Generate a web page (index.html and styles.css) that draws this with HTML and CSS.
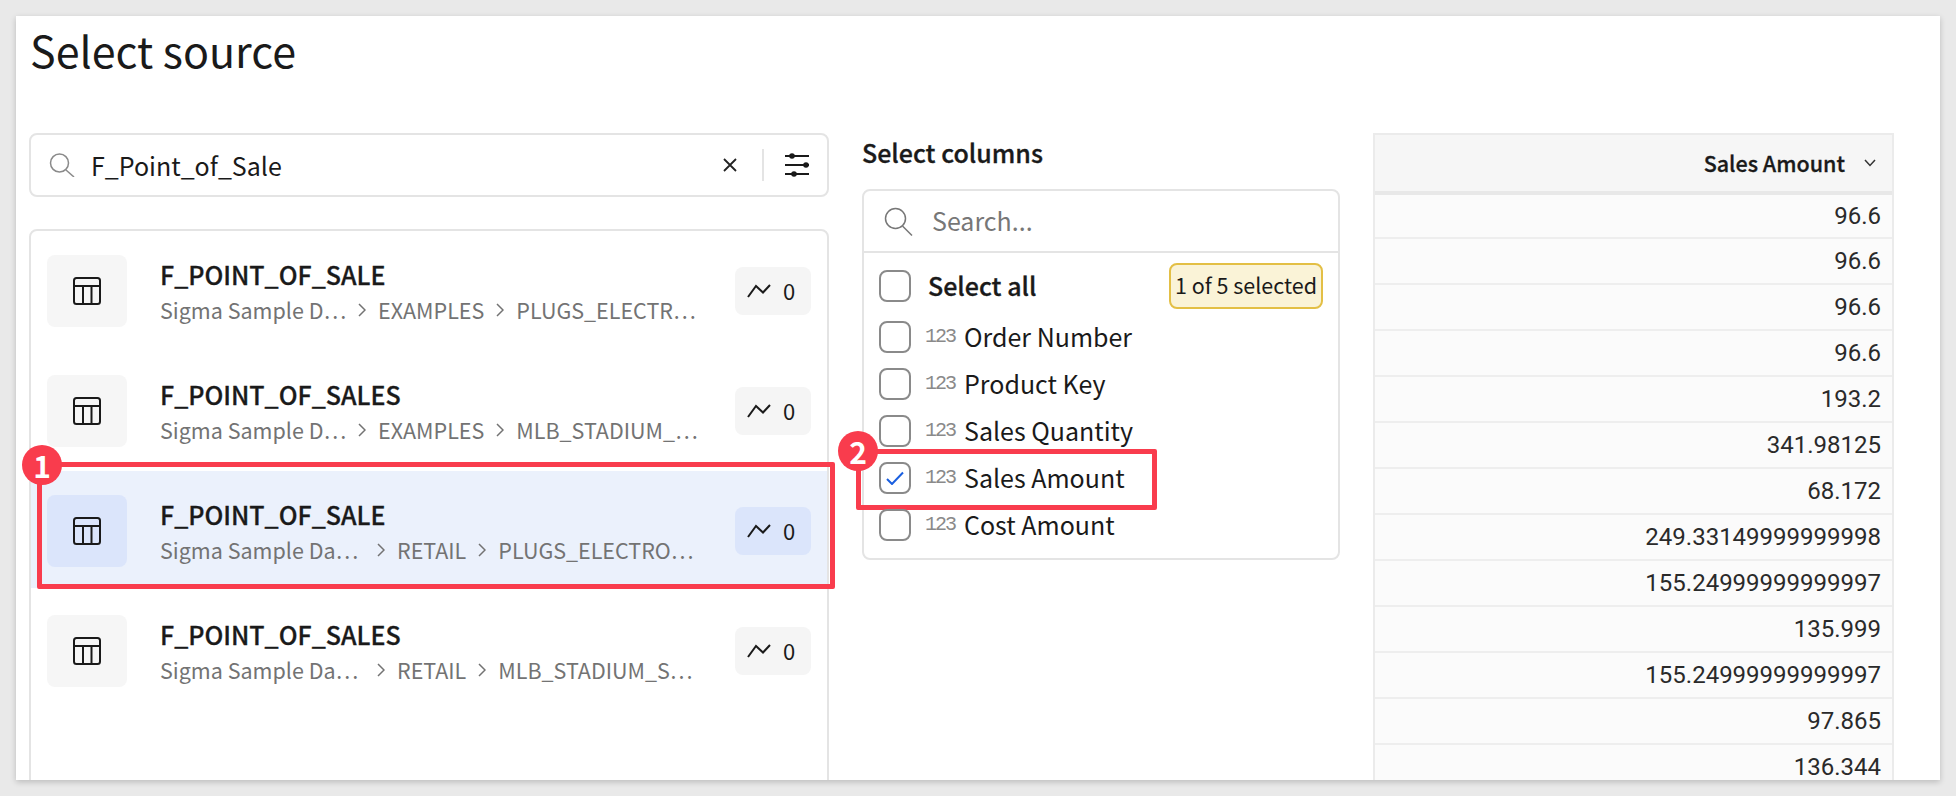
FILE: index.html
```html
<!DOCTYPE html>
<html lang="en">
<head>
    <meta charset="UTF-8">
    <meta name="viewport" content="width=device-width, initial-scale=1.0">
    <title>Select source</title>
    <link rel="stylesheet" href="styles.css">
</head>
<body>
    <svg class="sprites" width="0" height="0">
        <symbol id="i-table" viewBox="0 0 28 28">
            <rect x="1" y="1" width="26" height="26" rx="2.5" fill="none" stroke="currentColor" stroke-width="2"/>
            <path d="M1 9h26M10 9v18M18.500 9v18" fill="none" stroke="currentColor" stroke-width="2"/>
        </symbol>
        <symbol id="i-trend" viewBox="0 0 24 14">
            <path d="M1 13L9 2l7 6.500L23 1" fill="none" stroke="currentColor" stroke-width="2"/>
        </symbol>
        <symbol id="i-chev" viewBox="0 0 8 14">
            <path d="M1 1l6 6-6 6" fill="none" stroke="currentColor" stroke-width="1.500"/>
        </symbol>
    </svg>

    <div class="card">
        <h1>Select source</h1>
        <div class="columns">
            <div class="source-col">
                <div class="search-box">
                    <svg class="icon-search" width="26" height="24" viewBox="0 0 26 24"><circle cx="10.500" cy="10" r="9" fill="none" stroke="#8a8a8a" stroke-width="1.500"/><path d="M17 17l8 7" stroke="#8a8a8a" stroke-width="1.500"/></svg>
                    <span class="search-value">F_Point_of_Sale</span>
                    <svg class="icon-x" width="14" height="14" viewBox="0 0 14 14"><path d="M1 1l12 12M13 1L1 13" stroke="#222" stroke-width="1.800"/></svg>
                    <span class="search-sep"></span>
                    <svg class="icon-sliders" width="26" height="26" viewBox="0 0 26 26"><path d="M1 4h24M1 13h24M1 22h24" stroke="#1a1a1a" stroke-width="2"/><circle cx="8" cy="4" r="2.800" fill="#1a1a1a"/><circle cx="22" cy="13" r="2.800" fill="#1a1a1a"/><circle cx="10" cy="22" r="2.800" fill="#1a1a1a"/></svg>
                </div>

                <div class="source-list">
                    <div class="source-row">
                        <div class="source-inner">
                            <div class="table-icon"><svg width="28" height="28"><use href="#i-table"/></svg></div>
                            <div class="source-text">
                                <div class="source-name">F_POINT_OF_SALE</div>
                                <div class="source-path">
                                    <span class="seg-db narrow">Sigma Sample D…</span>
                                    <svg class="chev" width="8" height="14"><use href="#i-chev"/></svg>
                                    <span>EXAMPLES</span>
                                    <svg class="chev" width="8" height="14"><use href="#i-chev"/></svg>
                                    <span>PLUGS_ELECTR…</span>
                                </div>
                            </div>
                            <div class="stat-pill"><svg width="24" height="14"><use href="#i-trend"/></svg><span class="stat-num">0</span></div>
                        </div>
                    </div>
                    <div class="source-row">
                        <div class="source-inner">
                            <div class="table-icon"><svg width="28" height="28"><use href="#i-table"/></svg></div>
                            <div class="source-text">
                                <div class="source-name">F_POINT_OF_SALES</div>
                                <div class="source-path">
                                    <span class="seg-db narrow">Sigma Sample D…</span>
                                    <svg class="chev" width="8" height="14"><use href="#i-chev"/></svg>
                                    <span>EXAMPLES</span>
                                    <svg class="chev" width="8" height="14"><use href="#i-chev"/></svg>
                                    <span>MLB_STADIUM_…</span>
                                </div>
                            </div>
                            <div class="stat-pill"><svg width="24" height="14"><use href="#i-trend"/></svg><span class="stat-num">0</span></div>
                        </div>
                    </div>
                    <div class="source-row selected">
                        <div class="source-inner">
                            <div class="table-icon"><svg width="28" height="28"><use href="#i-table"/></svg></div>
                            <div class="source-text">
                                <div class="source-name">F_POINT_OF_SALE</div>
                                <div class="source-path">
                                    <span class="seg-db wide">Sigma Sample Da…</span>
                                    <svg class="chev" width="8" height="14"><use href="#i-chev"/></svg>
                                    <span>RETAIL</span>
                                    <svg class="chev" width="8" height="14"><use href="#i-chev"/></svg>
                                    <span>PLUGS_ELECTRO…</span>
                                </div>
                            </div>
                            <div class="stat-pill"><svg width="24" height="14"><use href="#i-trend"/></svg><span class="stat-num">0</span></div>
                        </div>
                        <div class="mark mark-source"></div>
                        <div class="step step-source">1</div>
                    </div>
                    <div class="source-row">
                        <div class="source-inner">
                            <div class="table-icon"><svg width="28" height="28"><use href="#i-table"/></svg></div>
                            <div class="source-text">
                                <div class="source-name">F_POINT_OF_SALES</div>
                                <div class="source-path">
                                    <span class="seg-db wide">Sigma Sample Da…</span>
                                    <svg class="chev" width="8" height="14"><use href="#i-chev"/></svg>
                                    <span>RETAIL</span>
                                    <svg class="chev" width="8" height="14"><use href="#i-chev"/></svg>
                                    <span>MLB_STADIUM_S…</span>
                                </div>
                            </div>
                            <div class="stat-pill"><svg width="24" height="14"><use href="#i-trend"/></svg><span class="stat-num">0</span></div>
                        </div>
                    </div>
                </div>
            </div>

            <div class="columns-col">
                <div class="columns-title">Select columns</div>
                <div class="columns-panel">
                    <div class="columns-search">
                        <svg width="29" height="29" viewBox="0 0 29 29"><circle cx="11.500" cy="11.500" r="10" fill="none" stroke="#777" stroke-width="1.500"/><path d="M18.500 19l9.500 9.500" stroke="#777" stroke-width="1.500"/></svg>
                        <span class="columns-search-text">Search...</span>
                    </div>
                    <div class="column-list">
                        <div class="column-row select-all">
                            <span class="check"></span>
                            <span class="select-all-label">Select all</span>
                            <span class="count-badge">1 of 5 selected</span>
                        </div>
                        <div class="column-row"><span class="check"></span><span class="num-type">123</span><span class="col-name">Order Number</span></div>
                        <div class="column-row"><span class="check"></span><span class="num-type">123</span><span class="col-name">Product Key</span></div>
                        <div class="column-row"><span class="check"></span><span class="num-type">123</span><span class="col-name">Sales Quantity</span></div>
                        <div class="column-row">
                            <span class="check"><svg width="18" height="14" viewBox="0 0 18 14"><path d="M1 8l5 5L17 1.500" fill="none" stroke="#1a5fe0" stroke-width="2"/></svg></span>
                            <span class="num-type">123</span><span class="col-name">Sales Amount</span>
                            <div class="mark mark-column"></div>
                            <div class="step step-column">2</div>
                        </div>
                        <div class="column-row"><span class="check"></span><span class="num-type">123</span><span class="col-name">Cost Amount</span></div>
                    </div>
                </div>
            </div>

            <div class="preview">
                <div class="preview-head">
                    <span class="preview-title">Sales Amount</span>
                    <svg width="12" height="8" viewBox="0 0 12 8"><path d="M1 1l5 5.500L11 1" fill="none" stroke="#333" stroke-width="1.500"/></svg>
                </div>
                <div class="preview-cell">96.6</div>
                <div class="preview-cell">96.6</div>
                <div class="preview-cell">96.6</div>
                <div class="preview-cell">96.6</div>
                <div class="preview-cell">193.2</div>
                <div class="preview-cell">341.98125</div>
                <div class="preview-cell">68.172</div>
                <div class="preview-cell">249.33149999999998</div>
                <div class="preview-cell">155.24999999999997</div>
                <div class="preview-cell">135.999</div>
                <div class="preview-cell">155.24999999999997</div>
                <div class="preview-cell">97.865</div>
                <div class="preview-cell">136.344</div>
            </div>
        </div>
    </div>
</body>
</html>
```

FILE: styles.css
```css
body {
    margin: 0;
    padding: 16px;
    height: 796px;
    box-sizing: border-box;
    overflow: hidden;
    background-color: #e9e9e9;
    font-family: "Noto Sans CJK SC", "Noto Sans", sans-serif;
    color: #1a1a1a;
}
.sprites {
    display: block;
    height: 0;
}
.card {
    height: 764px;
    padding: 0 13px;
    overflow: hidden;
    background-color: #fff;
    box-shadow: 0 2px 6px rgba(0, 0, 0, 0.2);
}
h1 {
    margin: 0 0 50px 1px;
    font-size: 43px;
    font-weight: 400;
    line-height: 67px;
}
.columns {
    display: grid;
    grid-template-columns: 800px 478px 521px;
    column-gap: 33px;
}

/* left column */
.search-box {
    display: flex;
    align-items: center;
    height: 64px;
    box-sizing: border-box;
    padding: 0 17px 0 18px;
    border: 2px solid #e4e4e4;
    border-radius: 8px;
}
.search-value {
    flex: 1;
    margin-left: 16px;
    font-size: 25px;
}
.icon-x {
    margin-right: 25px;
}
.search-sep {
    width: 2px;
    height: 32px;
    margin-right: 20px;
    background-color: #e4e4e4;
}
.source-list {
    height: 600px;
    margin-top: 32px;
    box-sizing: border-box;
    border: 2px solid #e4e4e4;
    border-radius: 8px;
}
.source-row {
    position: relative;
    height: 117px;
    margin-bottom: 3px;
    box-sizing: border-box;
    padding: 24px 16px 0 16px;
}
.source-row.selected {
    background-color: #ebf1fc;
}
.source-inner {
    display: flex;
    align-items: center;
    height: 72px;
}
.table-icon {
    display: flex;
    align-items: center;
    justify-content: center;
    width: 80px;
    height: 72px;
    border-radius: 8px;
    background-color: #f6f6f6;
}
.selected .table-icon,
.selected .stat-pill {
    background-color: #dbe5fb;
}
.source-text {
    flex: 1;
    margin: 2px 0 0 33px;
}
.source-name {
    font-size: 25px;
    font-weight: 500;
    line-height: 36px;
    -webkit-text-stroke: 0.3px;
}
.source-path {
    display: flex;
    align-items: center;
    font-size: 21.500px;
    line-height: 36px;
    color: #737373;
}
.seg-db.narrow {
    width: 198px;
}
.seg-db.wide {
    width: 217px;
}
.chev {
    margin-right: 12px;
}
.source-path span:nth-of-type(2) {
    margin-right: 12px;
}
.stat-pill {
    display: flex;
    align-items: center;
    gap: 12px;
    width: 76px;
    height: 48px;
    box-sizing: border-box;
    padding-left: 12px;
    border-radius: 8px;
    background-color: #f5f5f5;
    font-size: 22px;
}
.stat-num {
    margin-bottom: 2px;
}

/* annotations */
.mark {
    position: absolute;
    box-sizing: border-box;
    border: 5px solid #f93c4d;
    border-radius: 2px;
}
.mark-source {
    top: -9px;
    left: 6px;
    width: 798px;
    height: 127px;
}
.mark-column {
    top: -5px;
    left: -23px;
    width: 301px;
    height: 61px;
}
.step {
    position: absolute;
    width: 40px;
    height: 40px;
    border-radius: 50%;
    background-color: #f93c4d;
    color: #fff;
    font-size: 30px;
    font-weight: 700;
    line-height: 40px;
    text-align: center;
}
.step-source {
    top: -26px;
    left: -9px;
}
.step-column {
    top: -23px;
    left: -41px;
}

/* middle column */
.columns-title {
    margin: 3px 0 21px;
    font-size: 25px;
    font-weight: 500;
    line-height: 32px;
    -webkit-text-stroke: 0.3px;
}
.columns-panel {
    border: 2px solid #e4e4e4;
    border-radius: 8px;
}
.columns-search {
    display: flex;
    align-items: center;
    gap: 19px;
    height: 60px;
    padding-left: 20px;
    border-bottom: 2px solid #e4e4e4;
    font-size: 25px;
    color: #777;
}
.columns-search-text {
    margin-bottom: 2px;
}
.column-list {
    padding: 9px 15px 10px;
}
.column-row {
    position: relative;
    display: flex;
    align-items: center;
    height: 47px;
    font-size: 25px;
}
.select-all {
    margin-bottom: 4px;
}
.select-all-label {
    flex: 1;
    margin: 0 0 2px 17px;
    font-weight: 500;
    -webkit-text-stroke: 0.3px;
}
.col-name {
    margin-bottom: 2px;
}
.check {
    display: flex;
    align-items: center;
    justify-content: center;
    width: 32px;
    height: 32px;
    box-sizing: border-box;
    border: 2px solid #8a8a8a;
    border-radius: 8px;
}
.num-type {
    width: 29px;
    margin: 0 10px 0 14px;
    font-family: "Liberation Mono", monospace;
    font-size: 20px;
    letter-spacing: -2px;
    color: #8a8a8a;
}
.count-badge {
    height: 46px;
    box-sizing: border-box;
    padding: 0 4px;
    border: 2px solid #e3bf45;
    border-radius: 8px;
    background-color: #faf3d7;
    font-size: 21.500px;
    line-height: 40px;
    white-space: nowrap;
}

/* right column */
.preview {
    border-left: 2px solid #ebebeb;
    border-right: 2px solid #ebebeb;
    background-color: #fbfbfb;
}
.preview-head {
    display: flex;
    align-items: center;
    justify-content: flex-end;
    gap: 19px;
    height: 62px;
    box-sizing: border-box;
    padding-right: 16px;
    border-top: 2px solid #ebebeb;
    border-bottom: 4px solid #e8e8e8;
    background-color: #f6f6f6;
    font-size: 21.500px;
    font-weight: 500;
}
.preview-title {
    margin-bottom: 2px;
    -webkit-text-stroke: 0.3px;
}
.preview-cell {
    height: 46px;
    box-sizing: border-box;
    padding-right: 11px;
    border-bottom: 2px solid #eeeeee;
    font-family: Roboto, sans-serif;
    font-size: 24px;
    line-height: 44px;
    text-align: right;
    color: #2a2a2a;
}
.preview-head + .preview-cell {
    height: 44px;
    line-height: 42px;
}
```
